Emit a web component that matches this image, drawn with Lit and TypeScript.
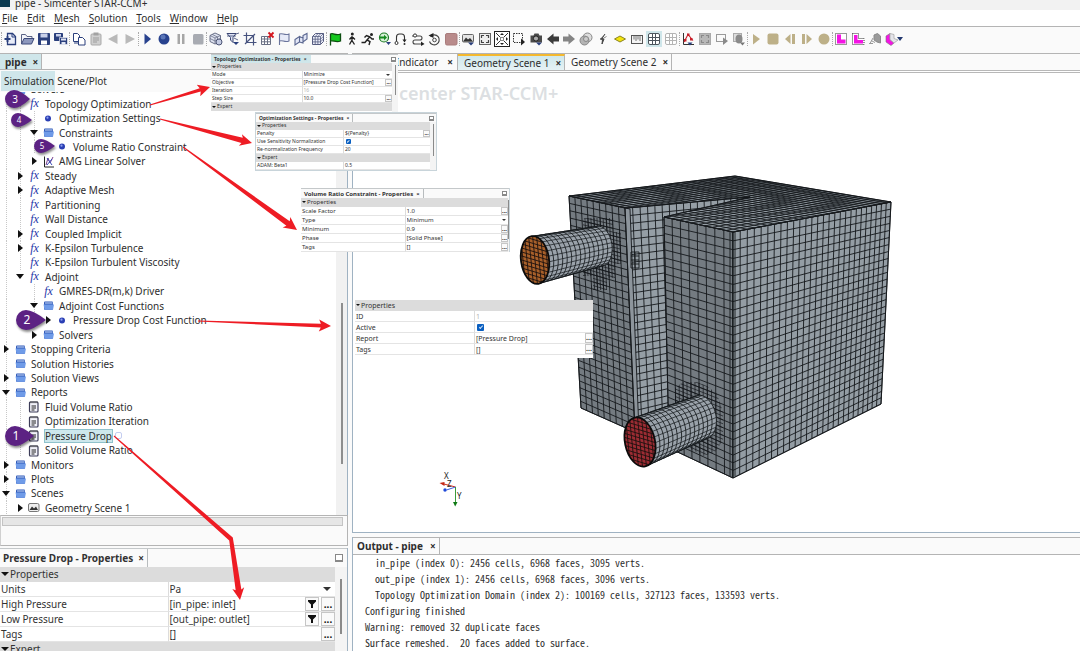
import { LitElement, html, svg, css, nothing } from "lit";
import { customElement, property } from "lit/decorators.js";
import { classMap } from "lit/directives/class-map.js";

/* ---------- toolbar icons (16 x 16) ---------- */

const NAVY = "#2a3f7c";
const DIM = "#a9a9a9";
const SAND = "#bdb088";

const grid = (c: string) => svg`
  <rect x="2.5" y="2.5" width="11" height="11" rx="1.5" fill="#fff" stroke=${c}/>
  <path d="M6.5 2.5v11M9.5 2.5v11M2.5 6.5h11M2.5 9.5h11" stroke=${c} fill="none"/>`;

const ICONS: Record<string, unknown> = {
  new: svg`<path d="M5.5 2.5h5l3 3v8h-8z" fill="#e8ecf8" stroke=${NAVY} stroke-width="1.3"/><path d="M10 2.500v3.500h3.500" fill="none" stroke=${NAVY}/><path d="M2.500 8h6M5.500 5v6" stroke=${NAVY} stroke-width="1.800"/>`,
  open: svg`<path d="M2.500 13V3.500h4l1.500 2h5V7" fill="#f4f5fa" stroke="#5a6284"/><path d="M2.500 13l2.500-5.500h10L12.500 13z" fill="#8d98bd" stroke="#3d4a7a"/>`,
  save: svg`<path d="M2.500 2.500h11v11h-11z" fill=${NAVY} stroke=${NAVY}/><path d="M4.500 2.500h7v4h-7z" fill="#c9d1ea"/><path d="M5 9.500h6v4H5z" fill="#fff"/>`,
  saveall: svg`<path d="M1.500 2.500h8v7h-8z" fill=${NAVY} stroke=${NAVY}/><path d="M3 3h5v2.500H3z" fill="#c9d1ea"/><path d="M6.500 6.500h8v7h-8z" fill=${NAVY} stroke="#fff" stroke-width=".6"/><path d="M8 7.500h5v2H8zM8.500 11h4v2.500h-4z" fill="#e1e6f4"/>`,
  copy: svg`<path d="M2.500 2.500h4l2 2v6h-6z" fill="#fff" stroke=${NAVY}/><path d="M7.500 6.500h4l2.500 2.500v5H7.500z" fill="#fff" stroke=${NAVY}/><path d="M3 12h4" stroke=${NAVY}/>`,
  paste: svg`<rect x="3" y="3" width="10" height="11" rx="1" fill="#cfcfcf" stroke=${DIM}/><path d="M5.500 1.500h5v3h-5z" fill="#a2a2a2"/><path d="M5 7h6M5 9h6M5 11h4" stroke="#9d9d9d"/>`,
  undo: svg`<path d="M12.500 3v10L3 8z" fill="#b9b9b9"/>`,
  redo: svg`<path d="M3.500 3v10L13 8z" fill="#b9b9b9"/>`,
  play: svg`<path d="M5.500 2.500v11L12 8z" fill="#28428e"/>`,
  record: svg`<circle cx="8" cy="8" r="5.500" fill="#28428e"/><circle cx="7" cy="6" r="2.500" fill="#5a76b8"/>`,
  pause: svg`<path d="M4.500 3h2.500v10H4.500zM9 3h2.500v10H9z" fill="#a6a6a6"/>`,
  stop: svg`<rect x="3" y="3" width="10.500" height="10.500" rx="1.500" fill="#a8abb2"/>`,
  mesh3d: svg`<path d="M7 2l5.500 2.500v6L7 13 2 10.500v-6z" fill="#dfe3f0" stroke="#6a7088"/><path d="M2 4.500L7 7l5.500-2.500M7 7v6M4 3.300l5.500 2.700v6M2 7.500l5 2.500 5.500-2.500" stroke="#6a7088" fill="none" stroke-width=".8"/><circle cx="11" cy="11" r="3" fill="#c4cbe2" stroke="#4c5474"/>`,
  meshf: svg`<path d="M2 2.500h9L8 6.500v5L5.500 9V6.500z" fill="#dde2f4" stroke="#3b4673"/><path d="M2 5h9M11 3l3-1M9 7l4 2" stroke="#3b4673" stroke-width=".8"/><path d="M8 11h6l-3 3z" fill=${NAVY}/>`,
  crop: svg`<path d="M4.500 1.500v10h10M1.500 4.500h10v10M3 13L13 3" fill="none" stroke="#46527e" stroke-width="1.200"/>`,
  clear: svg`<path d="M2.500 5.500h9v8h-9zM2.500 8h9M2.500 10.800h9M5.500 5.500v8M8.500 5.500v8" fill="#fff" stroke="#6a7084"/><path d="M9.500 1.500l5 5M14.500 1.500l-5 5" stroke="#d4141c" stroke-width="1.800"/>`,
  flag: svg`<path d="M3.500 14V3c3-1.500 5 2 9.500 0v7c-4.500 2-6.500-1.500-9.500 0" fill="#e6eaf8" stroke="#6a749c" stroke-width="1.100"/>`,
  slab: svg`<path d="M2 8.500l4.500-3v5.500L2 14zM6.500 5.500L10 7v5l-3.500-1M10 4.500l4-2v5.500l-4 3z" fill="#e2e6f6" stroke="#5a6690" stroke-width="1.100"/>`,
  volume: svg`<path d="M2.500 5.500l3-3h8v8l-3 3h-8z" fill="#eceefa" stroke="#565d80"/><path d="M2.500 5.500h8v8M10.500 5.500l3-3M2.500 8.200h8l3-3M2.500 10.900h8l3-3M5.200 13.500v-8l3-3M7.900 13.500v-8l3-3" fill="none" stroke="#565d80" stroke-width=".8"/>`,
  gflag: svg`<path d="M3.500 14.500V3c3-1.500 5 2 10 0v7c-4.500 2-7-1-10 0" fill="#14c81e" stroke="#0c4d10" stroke-width="1.300"/>`,
  walk: svg`<circle cx="8.300" cy="3" r="1.500" fill="#222"/><path d="M8 5v4.500l2.500 4M8 9l-2.500 4.500M8 5.500L5.500 8.500M8 5.500L11 8.500" stroke="#222" stroke-width="1.300" fill="none"/>`,
  run: svg`<circle cx="11.500" cy="3.500" r="1.500" fill="#222"/><path d="M10 5.500L7 9l3 1.500-1 3.500M7 9l-2 2.500H1.500M10 6L6.500 4.500 4.500 6.500M10 6l2 2h2" stroke="#222" stroke-width="1.400" fill="none"/>`,
  step: svg`<circle cx="7" cy="6.500" r="4.500" fill="#d8f0d8" stroke="#1b7a24" stroke-width="1.200"/><path d="M3 5.500h4V3.800l3 2.700-3 2.700V7.500H3z" fill="#148a1e"/><path d="M9 11h5l-2.500 3z" fill=${NAVY}/>`,
  loop: svg`<path d="M3.500 10.500V6a3 3 0 0 1 3-3h2a3 3 0 0 1 3 3v4" fill="none" stroke="#333" stroke-width="1.100"/><path d="M9.500 8.500h4l-2 3z" fill="#222"/><circle cx="3.500" cy="12" r="1.500" fill="#fff" stroke="#333"/><circle cx="11.500" cy="13" r="1" fill="#333"/>`,
  bypass: svg`<path d="M2 5h8a2 2 0 0 1 0 4H5a2 2 0 0 0 0 4h8" fill="none" stroke="#444" stroke-width="1.100"/><circle cx="5" cy="4.500" r="1.600" fill="#fff" stroke="#333"/><path d="M11 10.500l3.500 2.500-3.500 2z" fill="#222"/>`,
  reset: svg`<path d="M4.500 5.500a5 5 0 1 1-1 5" fill="none" stroke="#444" stroke-width="1.200"/><path d="M2.500 4.500L7.500 2v5z" fill="#222"/><circle cx="8.500" cy="9" r="1.800" fill="none" stroke="#444"/>`,
  rstop: svg`<rect x="2.500" y="2.500" width="11.500" height="11.500" rx="1.500" fill="#b98b8b" stroke="#a97c7c"/>`,
  scene: svg`<rect x="2.500" y="3.500" width="11" height="7.500" rx="1" fill="#e4e4e4" stroke="#666"/><path d="M3 10.500l3-4 2 2 2-1.500 3 3.500z" fill="#333"/><path d="M8 11.500h6l-3 3z" fill=${NAVY}/>`,
  fit: svg`<rect x="2.500" y="2.500" width="11" height="11" fill="#eee" stroke="#666"/><path d="M4.500 7V4.500H7M9 4.500h2.500V7M11.500 9v2.500H9M7 11.500H4.500V9" fill="none" stroke="#444" stroke-width="1.200"/>`,
  expand: svg`<rect x=".5" y=".5" width="15" height="15" fill="#fff" stroke="#222"/><path d="M2 2l12 12M14 2L2 14" stroke="#333"/><path d="M6 4l2-2 2 2zM6 12l2 2 2-2zM4 6L2 8l2 2zM12 6l2 2-2 2z" fill="#222"/><rect x="6.500" y="6.500" width="3" height="3" fill="#fff" stroke="#888"/>`,
  select: svg`<rect x="2.500" y="2.500" width="9" height="9" fill="none" stroke="#333" stroke-dasharray="1.500 1"/><path d="M10 7.500v7l4-3.500z" fill="#222"/>`,
  camera: svg`<path d="M2.500 4.500h3l1-2h4l1 2h2.500v7h-11.500z" fill="#4a4a4a"/><circle cx="8" cy="7.500" r="2.600" fill="#aaa" stroke="#222"/><path d="M8 11.500h6l-3 3z" fill=${NAVY}/>`,
  left: svg`<path d="M2 8l6.500-5.500v3H14v5H8.500v3z" fill="#3b3b3b"/>`,
  right: svg`<path d="M14 8L7.500 2.500v3H2v5h5.500v3z" fill="#858585"/>`,
  blend: svg`<circle cx="9.500" cy="6.500" r="4.500" fill="#ddd" stroke="#888"/><circle cx="6.500" cy="9.500" r="4.500" fill="#b4b4b4" stroke="#888"/><circle cx="8" cy="8" r="2.500" fill="#ccc" stroke="#888"/>`,
  probe: svg`<path d="M10 3L7 7.500l2 .5-2 5 .5-4.500L5 8" fill="#555" stroke="#444"/><path d="M9 7l2.500-1.500" stroke="#888"/>`,
  diamond: svg`<path d="M2.500 8L8 5l5.500 3L8 11z" fill="#f2e30c" stroke="#8c8420"/>`,
  ruler: svg`<rect x="2.500" y="4.500" width="11" height="8" fill="#f4f4f4" stroke="#555"/><path d="M5 5v3.500M7 5v5M9 5v3.500M11 5v5" stroke="#555" stroke-width=".8"/>`,
  grid: grid("#4c545c"),
  grid2: grid("#b4b4b4"),
  plot: svg`<path d="M3.500 2v11.500H14" fill="none" stroke="#333"/><path d="M4 11l4-7.500 5 6" fill="none" stroke="#c8202a" stroke-width="1.100"/><path d="M7 2.500h2.500V5H7zM4 8h2.500v2.500H4zM10 7h2.500v2.500H10z" fill="#c8202a"/><path d="M7.500 11.500h5L10 14.500z" fill=${NAVY}/>`,
  fit2: svg`<rect x="2.500" y="2.500" width="11" height="11" fill="#b8b8b8" stroke="#aaa"/><path d="M4.500 7V4.500H7M9 4.500h2.500V7M11.500 9v2.500H9M7 11.500H4.500V9" fill="none" stroke="#8a8a8a" stroke-width="1.200"/>`,
  select2: svg`<rect x="2.500" y="3.500" width="9" height="7" fill="none" stroke="#9a9a9a"/><path d="M9 6.500v7.500l5-4z" fill="#8a8a8a"/>`,
  shade: svg`<rect x="2.500" y="2.500" width="8" height="8" fill="#ddd" stroke="#aaa"/><ellipse cx="8" cy="8" rx="3.500" ry="4.500" fill="#8a8a8a"/><path d="M9 11.500h5l-2.500 3z" fill="#777"/>`,
  splay: svg`<path d="M5 3v10.500L12 8z" fill=${SAND}/>`,
  sstop: svg`<rect x="2.500" y="2.500" width="11" height="11" rx="2" fill=${SAND}/>`,
  sprev: svg`<path d="M8.500 3v10L3 8zM10 3h3v10h-3z" fill=${SAND}/>`,
  snext: svg`<path d="M7.500 3v10L13 8zM3 3h3v10H3z" fill=${SAND}/>`,
  srec: svg`<circle cx="8" cy="8" r="5.500" fill=${SAND}/>`,
  mag1: svg`<rect x="2.500" y="2.500" width="11" height="11" fill="#fff" stroke="#333" stroke-dasharray="1 1"/><path d="M4 3.500h4v5h4.500v4H4z" fill="#f414e4"/>`,
  mag2: svg`<path d="M2.500 2.500h6v5h5.500v6H2.500z" fill="#fff" stroke="#333" stroke-dasharray="1 1"/><path d="M4 4h3.500v5H13v3.500H4z" fill="#f414e4"/>`,
  plane: svg`<path d="M7 4l3.500-1.500L13.500 5v7L10 11l-3-2z" fill="#9a9a9a" stroke="#8a8a8a"/><path d="M3 12.500l3-5.500M2 12.500h4M4 9.500l4 2" stroke="#999" fill="none"/>`,
  section: svg`<path d="M2 5l4-2.500v6L10 12l-3 2.500L2 11z" fill="#f414e4" stroke="#777" stroke-width=".6"/><path d="M6 2.500l4 1v4l4 1.500-4 3-4-3.500z" fill="#e4e4ea" stroke="#aaa" stroke-width=".8"/>`,
};

const TOOLBAR: { cls: string; icons: string[] }[] = [
  { cls: "g1", icons: ["new", "open", "save", "saveall"] },
  { cls: "g2", icons: ["copy", "paste", "undo", "redo"] },
  { cls: "g3", icons: ["play", "record", "pause", "stop"] },
  { cls: "g4", icons: ["mesh3d", "meshf", "crop", "clear", "flag", "slab", "volume"] },
  { cls: "g5", icons: ["gflag", "walk", "run", "step", "loop", "bypass", "reset", "rstop"] },
  { cls: "g6", icons: ["scene", "fit", "expand", "select", "camera", "left", "right", "blend", "probe", "diamond", "ruler", "grid", "grid2"] },
  { cls: "g7", icons: ["plot", "fit2", "select2", "shade"] },
  { cls: "g8", icons: ["splay", "sstop", "sprev", "snext", "srec"] },
  { cls: "g9", icons: ["mag1", "mag2", "plane", "section"] },
];

/* ---------- simulation tree ---------- */

type Node = { l: number; t: string; i: string; a?: "o" | "c"; g?: number[]; sel?: boolean };

const TREE: Node[] = [
  { l: 0, t: "Solvers", i: "folder", a: "o" },
  { l: 1, t: "Topology Optimization", i: "fx", g: [0, 1] },
  { l: 2, t: "Optimization Settings", i: "dot", g: [0, 1, 2] },
  { l: 2, t: "Constraints", i: "folder", a: "o", g: [0, 1, 2] },
  { l: 3, t: "Volume Ratio Constraint", i: "dot", g: [0, 1, 2] },
  { l: 2, t: "AMG Linear Solver", i: "amg", a: "c", g: [0, 1] },
  { l: 1, t: "Steady", i: "fx", a: "c", g: [0, 1] },
  { l: 1, t: "Adaptive Mesh", i: "fx", a: "c", g: [0, 1] },
  { l: 1, t: "Partitioning", i: "fx", g: [0, 1] },
  { l: 1, t: "Wall Distance", i: "fx", g: [0, 1] },
  { l: 1, t: "Coupled Implicit", i: "fx", a: "c", g: [0, 1] },
  { l: 1, t: "K-Epsilon Turbulence", i: "fx", a: "c", g: [0, 1] },
  { l: 1, t: "K-Epsilon Turbulent Viscosity", i: "fx", g: [0, 1] },
  { l: 1, t: "Adjoint", i: "fx", a: "o", g: [0] },
  { l: 2, t: "GMRES-DR(m,k) Driver", i: "fx", g: [0, 2] },
  { l: 2, t: "Adjoint Cost Functions", i: "folder", a: "o", g: [0, 2] },
  { l: 3, t: "Pressure Drop Cost Function", i: "dot", a: "c", g: [0, 2] },
  { l: 2, t: "Solvers", i: "folder", a: "c", g: [0] },
  { l: 0, t: "Stopping Criteria", i: "folder", a: "c", g: [0] },
  { l: 0, t: "Solution Histories", i: "folder", g: [0] },
  { l: 0, t: "Solution Views", i: "folder", a: "c", g: [0] },
  { l: 0, t: "Reports", i: "folder", a: "o", g: [0] },
  { l: 1, t: "Fluid Volume Ratio", i: "rep", g: [0, 1] },
  { l: 1, t: "Optimization Iteration", i: "rep", g: [0, 1] },
  { l: 1, t: "Pressure Drop", i: "rep", g: [0, 1], sel: true },
  { l: 1, t: "Solid Volume Ratio", i: "rep", g: [0, 1] },
  { l: 0, t: "Monitors", i: "folder", a: "c", g: [0] },
  { l: 0, t: "Plots", i: "folder", a: "c", g: [0] },
  { l: 0, t: "Scenes", i: "folder", a: "o", g: [0] },
  { l: 1, t: "Geometry Scene 1", i: "scene", a: "c", g: [0] },
];

const TREE_ICONS: Record<string, unknown> = {
  folder: svg`<path d="M2 3.500q0-1 1-1h7q1 0 1 1V10q0 .7-.7.7H2.700Q2 10.700 2 10z" fill="#2f58b8"/><path d="M1.500 5.500h10.500l-1 5.200H2.500z" fill="#6f9be8"/><path d="M3 4h7.500" stroke="#cfe0fb"/>`,
  dot: svg`<circle cx="6" cy="6.500" r="3" fill="#2b3fb4"/><circle cx="5.500" cy="5.700" r="1.100" fill="#8fa0ee"/>`,
  amg: svg`<path d="M2.500 1.500v10.500H12" fill="none" stroke="#222"/><path d="M4 10l2-7 2 5 3-6" fill="none" stroke="#7a3f8c"/><path d="M5 3l5 7M10 4l-5 6" stroke="#3a4bb8"/>`,
  rep: svg`<rect x="1.500" y="2" width="8.500" height="10" rx="1" fill="#f2f2fa" stroke="#3c3c58" stroke-width="1.200"/><path d="M3.500 6h4.500M3.500 8h4.500M3.500 10h3" stroke="#222"/><path d="M3 1.200v2M5 1.200v2M7 1.200v2M9 1.200v2" stroke="#444"/>`,
  scene: svg`<rect x=".5" y="2.500" width="10.500" height="8" rx="1.500" fill="#eee" stroke="#777"/><path d="M1.500 9L4 5.500 6 7.500 8 5.500 10 9z" fill="#333"/>`,
};

/* ---------- geometry helpers for the meshed solid ---------- */

type P = [number, number];

/** Projective map of the unit square on to a quad given as (0,0) (1,0) (1,1) (0,1). */
function project(q: P[]): (u: number, v: number) => P {
  const [[x0, y0], [x1, y1], [x2, y2], [x3, y3]] = q;
  const dx1 = x1 - x2, dx2 = x3 - x2, sx = x0 - x1 + x2 - x3;
  const dy1 = y1 - y2, dy2 = y3 - y2, sy = y0 - y1 + y2 - y3;
  const det = dx1 * dy2 - dx2 * dy1;
  const g = (sx * dy2 - dx2 * sy) / det;
  const h = (dx1 * sy - sx * dy1) / det;
  const a = x1 - x0 + g * x1, b = x3 - x0 + h * x3;
  const d = y1 - y0 + g * y1, e = y3 - y0 + h * y3;
  return (u, v) => {
    const w = g * u + h * v + 1;
    return [(a * u + b * v + x0) / w, (d * u + e * v + y0) / w];
  };
}

const f = (n: number) => n.toFixed(2);
const poly = (pts: P[]) => pts.map(([x, y]) => `${f(x)},${f(y)}`).join(" ");

function meshPath(q: P[], nu: number, nv: number): string {
  const m = project(q);
  let d = "";
  const seg = (p: P, r: P) => (d += `M${f(p[0])} ${f(p[1])}L${f(r[0])} ${f(r[1])}`);
  for (let i = 0; i <= nu; i++) seg(m(i / nu, 0), m(i / nu, 1));
  for (let j = 0; j <= nv; j++) seg(m(0, j / nv), m(1, j / nv));
  return d;
}

const TOP: P[] = [[569, 196], [735, 176], [891, 202], [733, 232]];
const TOP_OUTLINE: P[] = [[569, 196], [735, 176], [891, 202], [733, 232], [664, 217], [750, 197], [627, 208]];
const RIGHT: P[] = [[733, 232], [891, 202], [881, 404], [733, 478]];
const FRONT: P[] = [[664, 217], [733, 232], [733, 478], [669, 448]];
const NOTCH: P[] = [[625, 208], [750, 196], [752, 402], [635, 432]];
const COLUMN: P[] = [[569, 196], [625, 208], [635, 432], [581, 408]];

type Pipe = { a: P; ar: P; b: P; br: P; tilt: number; cap: string; id: string };
const PIPES: Pipe[] = [
  { a: [535, 260], ar: [14, 24], b: [600, 246], br: [12, 20], tilt: -8, cap: "#a8602a", id: "cap-in" },
  { a: [640, 442], ar: [15, 25], b: [702, 417], br: [14, 22], tilt: -12, cap: "#9c2c33", id: "cap-out" },
];

function pipe(p: Pipe) {
  const rings = 14;
  const mix = (t: number) => ({
    cx: p.a[0] + (p.b[0] - p.a[0]) * t,
    cy: p.a[1] + (p.b[1] - p.a[1]) * t,
    rx: p.ar[0] + (p.br[0] - p.ar[0]) * t,
    ry: p.ar[1] + (p.br[1] - p.ar[1]) * t,
  });
  const k = (p.tilt * Math.PI) / 180;
  const on = (t: number, th: number): P => {
    const m = mix(t);
    const x = m.rx * Math.cos(th), y = m.ry * Math.sin(th);
    return [m.cx + x * Math.cos(k) - y * Math.sin(k), m.cy + x * Math.sin(k) + y * Math.cos(k)];
  };
  const discs = [];
  for (let i = rings; i > 0; i--) {
    const m = mix(i / rings);
    discs.push(svg`<ellipse cx=${f(m.cx)} cy=${f(m.cy)} rx=${f(m.rx)} ry=${f(m.ry)}
      transform=${`rotate(${p.tilt} ${f(m.cx)} ${f(m.cy)})`} fill="#9aa2aa" stroke="#14181b" stroke-width=".8"/>`);
  }
  let lines = "";
  for (let i = -7; i <= 7; i++) {
    const th = (i / 7) * (Math.PI / 2) * 1.05 - 0.08;
    const s = on(0, th), e = on(1, th);
    lines += `M${f(s[0])} ${f(s[1])}L${f(e[0])} ${f(e[1])}`;
  }
  const c = mix(0);
  let cells = "";
  for (let i = -28; i <= 28; i += 4) {
    cells += `M${f(c.cx + i - 3)} ${f(c.cy - 30)}L${f(c.cx + i + 3)} ${f(c.cy + 30)}M${f(c.cx - 20)} ${f(c.cy + i - 6)}L${f(c.cx + 20)} ${f(c.cy + i + 6)}`;
  }
  const rot = `rotate(${p.tilt} ${f(c.cx)} ${f(c.cy)})`;
  return svg`
    <clipPath id=${p.id}><ellipse cx=${c.cx} cy=${c.cy} rx=${c.rx} ry=${c.ry} transform=${rot}/></clipPath>
    ${discs}
    <path d=${lines} stroke="#14181b" stroke-width=".7" fill="none"/>
    <ellipse cx=${c.cx} cy=${c.cy} rx=${c.rx} ry=${c.ry} transform=${rot} fill=${p.cap}/>
    <path d=${cells} clip-path=${`url(#${p.id})`} stroke="#1c1210" stroke-width=".9"/>
    <ellipse cx=${c.cx} cy=${c.cy} rx=${c.rx} ry=${c.ry} transform=${rot} fill="none" stroke="#0b0b0b" stroke-width="1.800"/>`;
}

const solid = svg`
  <clipPath id="top"><polygon points=${poly(TOP_OUTLINE)}/></clipPath>
  <clipPath id="r1"><path d="M583 218h30v14h8v32h-6v14h-8v12h-14v-14h-10z"/></clipPath>
  <clipPath id="r2"><path d="M675 388l8-6h14l10 4 10 8 6 18v28l-8 12-12 4-10-6-18-8z"/></clipPath>
  <clipPath id="col"><polygon points=${poly(COLUMN)}/></clipPath>
  <clipPath id="frt"><polygon points=${poly(FRONT)}/></clipPath>
  <g stroke="#15191c" fill="none" stroke-width=".9">
    <polygon points=${poly(NOTCH)} fill="#959ea5"/>
    <path d=${meshPath(NOTCH, 18, 30)}/>
    <polygon points=${poly(COLUMN)} fill="#747b81"/>
    <path d="M625 208l5 1 9 223-4 0z" fill="#8d959c"/>
    <path d=${meshPath(COLUMN, 9, 30)}/>
    <g clip-path="url(#col)"><path stroke-width=".7" clip-path="url(#r1)" d=${meshPath(COLUMN, 18, 60)}/></g>
    <path d="M631 252h8v16h-8zM635 252v16M631 256h8M631 260h8M631 264h8"/>
    <polygon points=${poly(FRONT)} fill="#747b81"/>
    <path d=${meshPath(FRONT, 8, 30)}/>
    <g clip-path="url(#frt)"><path stroke-width=".7" clip-path="url(#r2)" d=${meshPath(FRONT, 16, 60)}/></g>
    <polygon points=${poly(RIGHT)} fill="#949da4"/>
    <path d=${meshPath(RIGHT, 27, 30)}/>
    <path d="M730 232v244M735 232v244"/>
    <polygon points=${poly(TOP_OUTLINE)} fill="#949da4"/>
    <path clip-path="url(#top)" d=${meshPath(TOP, 27, 27)}/>
    <polygon points=${poly(TOP_OUTLINE)}/>
  </g>
  ${PIPES.map(pipe)}`;

/** A tapering shaft through the points, with a barbed head on the last one. */
function arrow(pts: P[], w: number, head: number) {
  const n = pts.length;
  const total = pts.slice(1).reduce((s, p, i) => s + Math.hypot(p[0] - pts[i][0], p[1] - pts[i][1]), 0);
  const [bx, by] = pts[n - 1];
  const [ax, ay] = pts[n - 2];
  const L = Math.hypot(bx - ax, by - ay);
  const ux = (bx - ax) / L, uy = (by - ay) / L;
  const neck: P = [bx - ux * head * 0.85, by - uy * head * 0.85];
  const path = [...pts.slice(0, -1), neck];
  const leftSide: P[] = [], rightSide: P[] = [];
  let run = 0;
  path.forEach((p, i) => {
    if (i) run += Math.hypot(p[0] - path[i - 1][0], p[1] - path[i - 1][1]);
    const q = path[Math.min(i + 1, path.length - 1)], o = path[Math.max(i - 1, 0)];
    const l = Math.hypot(q[0] - o[0], q[1] - o[1]) || 1;
    const nx = -(q[1] - o[1]) / l, ny = (q[0] - o[0]) / l;
    const hw = (1 + (w - 1) * (run / total)) / 2;
    leftSide.push([p[0] + nx * hw, p[1] + ny * hw]);
    rightSide.unshift([p[0] - nx * hw, p[1] - ny * hw]);
  });
  const hb: P = [bx - ux * head, by - uy * head];
  const s = head * 0.5;
  return svg`<polygon points=${poly([...leftSide, [hb[0] - uy * s, hb[1] + ux * s], [bx, by], [hb[0] + uy * s, hb[1] - ux * s], ...rightSide])}/>`;
}

const pin = (n: string, cx: number, cy: number, r: number, tip: number, size: number) => svg`
  <path class="pin" d=${`M${cx} ${cy - r}Q${cx + r * 0.7} ${cy - r} ${tip} ${cy}Q${cx + r * 0.7} ${cy + r} ${cx} ${cy + r}A${r} ${r} 0 0 1 ${cx} ${cy - r}z`}/>
  <text class="pin-no" x=${cx + 1} y=${cy + Math.round(size * 0.36)} font-size=${size}>${n}</text>`;

/* ---------- property sheet ---------- */

type Row = { k: string; v?: string; head?: boolean; kind?: "more" | "filter" | "select" | "check" | "dim"; };

@customElement("property-sheet")
export class PropertySheet extends LitElement {
  @property() heading = "";
  @property({ type: Boolean }) tinted = false;
  @property({ type: Number }) split = 50;
  @property({ attribute: false }) rows: Row[] = [];

  static styles = css`
    :host { display: flex; flex-direction: column; background: #fff; color: #333; box-sizing: border-box; overflow: hidden; }
    .bar { display: flex; justify-content: space-between; align-items: center; height: var(--bar, 9px); flex: none; background: #fafafa; border-top: 1px solid #c4c8ca; box-sizing: border-box; }
    .tab { display: flex; align-items: center; gap: var(--tab-gap, 3px); align-self: stretch; padding: 0 3px; border-right: 1px solid #b8bcbe; font-weight: 700; white-space: nowrap; }
    .props-pad .tab { padding-left: 5px; }
    .tinted .tab, .tinted tr:first-child td { background: #cfe6ea; border-color: #cfe6ea; }
    .close, .min { border: 0; background: none; padding: 0; font: inherit; line-height: 1; color: #333; }
    .min { width: var(--min, 5px); height: var(--min, 5px); border: 1px solid #888; border-bottom-width: 2px; box-sizing: border-box; margin-right: var(--min-gap, 2px); background: #fff; }
    .body { flex: 1; min-height: 0; display: flex; align-items: flex-start; }
    table { flex: 1; min-width: 0; border-collapse: separate; border-spacing: 0; table-layout: fixed; }
    td { padding: 0; height: var(--row, 8px); box-sizing: border-box; border-bottom: 1px solid #e4e4e4; line-height: 1; white-space: nowrap; overflow: hidden; }
    td + td { border-left: 1px solid #dcdcdc; }
    .head td { background: #dcdcdc; border-color: #dcdcdc; }
    .key { padding-left: 1px; }
    .cell { display: flex; align-items: center; justify-content: space-between; padding-left: 1px; height: calc(var(--row, 8px) - 1px); }
    .dim { color: #b4b4b4; }
    .headline { display: flex; align-items: center; gap: 1px; }
    .tri { border: var(--caret, 2px) solid transparent; border-top-color: #111; border-bottom: 0; margin-left: 1px; }
    .tools { display: flex; gap: 2px; }
    .tool { width: var(--tool, 7px); height: calc(var(--row, 8px) - 1px); padding: 0 0 1px; border: 1px solid #c6c6c6; background: #fafafa; font: inherit; font-weight: 700; line-height: 0; color: #111; display: grid; place-items: center; box-sizing: border-box; overflow: hidden; }
    .tool svg { width: 8px; height: 10px; }
    select { appearance: none; border: 0; background: none; padding: 0; font: inherit; color: inherit; line-height: 1; flex: 1; height: auto; min-width: 0; }
    .caret { border: var(--caret, 2px) solid transparent; border-top-color: #333; border-bottom: 0; margin-right: var(--caret, 2px); }
    input { appearance: none; width: var(--check, 5px); height: var(--check, 5px); margin: 0 0 0 1px; background: #0a5fc0; border-radius: 1px; display: grid; place-items: center; }
    input::after { content: ""; width: 50%; height: 25%; border: solid #cfe0f4; border-width: 0 0 1px 1px; transform: rotate(-45deg); box-sizing: border-box; }
    .rail { align-self: stretch; width: var(--rail, 6px); background: #f4f4f4; display: flex; justify-content: center; padding-top: var(--rail-top, 2px); box-sizing: border-box; }
    .thumb { width: var(--thumb-w, 1px); height: var(--thumb, 75%); background: #8a8a8a; }
  `;

  private value(r: Row) {
    if (r.kind === "check") return html`<input type="checkbox" checked aria-label=${r.k} />`;
    if (r.kind === "select")
      return html`<select aria-label=${r.k}><option>${r.v}</option></select><span class="caret"></span>`;
    const more = html`<button class="tool" aria-label=${`Edit ${r.k}`}>...</button>`;
    const filter = html`<button class="tool" aria-label=${`Filter ${r.k}`}><svg viewBox="0 0 8 10"><path d="M0 1h8v1.500L5 5.500V9H3V5.500L0 2.500z" fill="#111"/></svg></button>`;
    return html`<span class=${classMap({ dim: r.kind === "dim" })}>${r.v}</span>
      ${r.kind === "more" || r.kind === "filter"
        ? html`<span class="tools">${r.kind === "filter" ? filter : nothing}${more}</span>`
        : nothing}`;
  }

  render() {
    return html`
      ${this.heading
        ? html`<div class=${classMap({ bar: true, tinted: this.tinted })}>
            <span class="tab">${this.heading}<button class="close" aria-label="Close">×</button></span>
            <button class="min" aria-label="Minimize"></button>
          </div>`
        : nothing}
      <div class=${classMap({ body: true, tinted: this.tinted })}>
        <table>
          <colgroup><col style=${`width:${this.split}%`} /><col /></colgroup>
          ${this.rows.map((r) =>
            r.head
              ? html`<tr class="head"><td colspan="2"><span class="headline"><span class="tri"></span>${r.k}</span></td></tr>`
              : html`<tr><td class="key">${r.k}</td><td><div class="cell">${this.value(r)}</div></td></tr>`
          )}
        </table>
        <div class="rail"><div class="thumb"></div></div>
      </div>`;
  }
}

/* ---------- application window ---------- */

@customElement("app-root")
export class AppRoot extends LitElement {
  static styles = css`
    :host { display: flex; flex-direction: column; position: relative; height: 100vh; overflow: hidden; background: #fafafa; color: #2e2e2e; font: 10px/14px "Noto Sans", sans-serif; }
    button, select, input { font: inherit; color: inherit; }
    .title { height: 10px; flex: none; overflow: hidden; background: #f2f2f2; display: flex; align-items: flex-end; gap: 5px; line-height: 14px; }
    .logo { width: 10px; height: 7px; align-self: flex-start; background: #0b3a50; }
    .menu { display: flex; gap: 9px; height: 16px; padding: 0 2px; background: #fff; border-bottom: 1px solid #b4b4b4; flex: none; }
    .menu button { border: 0; padding: 0; background: none; line-height: 17px; height: 16px; }
    .toolbar { height: 26px; flex: none; display: flex; align-items: center; padding: 0 0 2px 1px; box-sizing: border-box; }
    .group { display: flex; justify-content: space-around; align-items: center; height: 14px; border-left: 1px dotted #aaa; box-sizing: border-box; }
    .g1, .g3, .g7, .g9 { width: 68px; }
    .g2 { width: 69px; }
    .g4 { width: 120px; }
    .g5 { width: 133px; }
    .g6 { width: 220px; }
    .g8 { width: 85px; }
    .ib { width: 16px; height: 16px; padding: 0; border: 0; background: none; display: block; }
    .ib svg { display: block; width: 16px; height: 16px; }
    .on { background: #cfe6ea; }
    .drop { border: 3px solid transparent; border-top: 4px solid #23386f; border-bottom: 0; margin-left: -3px; }

    .main { flex: 1; min-height: 0; display: grid; grid-template-columns: 348px minmax(0, 1fr); column-gap: 4px; }
    .side, .work { display: flex; flex-direction: column; min-height: 0; min-width: 0; }
    .tabs { display: flex; height: 17px; flex: none; border-top: 1px solid #b4b4b4; border-bottom: 1px solid #b4b4b4; box-sizing: border-box; }
    .tab { display: flex; align-items: center; justify-content: space-between; gap: 6px; padding: 0 5px; border-right: 1px solid #b4b4b4; white-space: nowrap; }
    .x { border: 0; background: none; padding: 0; line-height: 1; font-weight: 700; }
    .pipe { background: #cfe6ea; font-weight: 700; padding: 0 3px 0 5px; }
    .views { display: flex; height: 20px; flex: none; padding: 1px; gap: 2px; }
    .view { border: 0; background: none; padding: 0; }
    .view.current { background: #cfe6ea; padding: 0 1px 0 3px; }
    .treebox { flex: 1; min-height: 0; display: flex; background: #fff; border-right: 1px solid #9fb2c2; }
    .scroll { flex: 1; overflow: hidden; display: flex; flex-direction: column; justify-content: flex-end; }
    .tree { margin: 0; padding: 0; list-style: none; height: 433px; flex: none; display: flex; flex-direction: column; }
    .node { flex: 1; display: flex; align-items: center; min-height: 0; }
    .guide, .twist { width: 14px; align-self: stretch; flex: none; display: flex; justify-content: center; align-items: center; box-sizing: border-box; padding-right: 2px; }
    .line { background: repeating-linear-gradient(#c8c8c8 0 1px, transparent 1px 2px) 6px 0 / 1px 100% no-repeat; }
    .closed { border: 4px solid transparent; border-left: 5px solid #111; border-right: 0; }
    .opened { border: 4px solid transparent; border-top: 5px solid #111; border-bottom: 0; }
    .icon { width: 14px; height: 13px; flex: none; margin-right: 3px; display: block; }
    .fx { width: 13px; flex: none; margin-right: 4px; font: italic 12px/13px "Liberation Serif", serif; color: #2636a8; text-align: center; }
    .name { white-space: nowrap; }
    .sel { background: #cde7ec; box-shadow: 0 0 0 1px #8fc2cc; line-height: 12px; }
    .bubble { width: 5px; height: 5px; margin-left: 3px; border: 1px solid #c4cdf0; border-radius: 2px; }
    .track { width: 11px; flex: none; background: #f1f1f1; display: flex; justify-content: center; align-items: flex-end; padding-bottom: 51px; box-sizing: border-box; }
    .grip { width: 2px; height: 161px; background: #8e8e8e; }
    .hbar { height: 31px; flex: none; box-sizing: border-box; border: 1px solid #b4b4b4; border-left-color: #d0d0d0; padding: 1px 4px 0 1px; }
    .hthumb { height: 9px; background: #e6e6e6; border: 1px solid #c4c4c4; box-sizing: border-box; }
    .props { margin-top: 2px; height: 103px; flex: none; border-right: 1px solid #9fb2c2; --bar: 19px; --row: 15px; --tool: 14px; --rail: 12px; --min: 8px; --min-gap: 4px; --caret: 4px; --tab-gap: 5px; --thumb: 55px; --thumb-w: 2px; --rail-top: 12px; }

    .doc { border-bottom: 0; }
    .doc .tab { box-sizing: border-box; padding: 0 3px 0 6px; width: 107px; }
    .doc .first { width: 106px; justify-content: flex-end; gap: 9px; padding-right: 4px; }
    .doc .current { background: linear-gradient(#cfe8ec, #e6f2f4); border-top: 2px solid #f4b82e; padding-bottom: 1px; }
    .view3d { flex: 1; min-height: 0; background: #fff; border: 1px solid #9fb2c2; border-top: 3px double #b8b8b8; border-right: 0; position: relative; }
    .mark { position: absolute; left: 46px; top: 8px; font-size: 18px; line-height: 24px; font-weight: 600; color: #dcdfe2; white-space: nowrap; }
    .out { height: 114px; flex: none; margin-top: 4px; display: flex; flex-direction: column; border-left: 1px solid #9fb2c2; }
    .out .tabs { height: 18px; }
    .out .tab { font-weight: 700; gap: 7px; padding: 0 3px 0 4px; }
    .log { margin: 0; padding: 0 12px; background: #fff; flex: 1; overflow: hidden; font: 10px/16px "Noto Sans CJK SC", monospace; font-feature-settings: "hwid", "liga" 0; }

    .ink { position: absolute; left: 0; top: 0; width: 1080px; height: 651px; pointer-events: none; }
    .pin { fill: #5c2283; filter: drop-shadow(1px 2px 1px rgba(0, 0, 0, 0.45)); }
    .pin-no { fill: #fff; text-anchor: middle; }
    .axis { font-size: 8px; fill: #222; }
    .float { position: absolute; }
    .p1 { left: 211px; top: 54px; width: 187px; height: 58px; font-size: 5px; --bar: 9px; --thumb: 30px; }
    .p2 { left: 256px; top: 113px; width: 180px; height: 57px; font-size: 5px; box-shadow: 0 0 0 1px #c8d4da; --thumb: 32px; }
    .p3 { left: 301px; top: 188px; width: 209px; height: 64px; font-size: 6px; --bar: 10px; --row: 9px; --rail: 1px; border-right: 1px solid #c8d4da; }
    .p4 { left: 355px; top: 300px; width: 238px; height: 58px; font-size: 7px; --row: 11px; --rail: 0px; --tool: 8px; --check: 7px; }
  `;

  private ibutton(n: string) {
    return html`<button class=${classMap({ ib: true, on: n === "grid" })} aria-label=${n}><svg viewBox="0 0 16 16">${ICONS[n]}</svg></button>`;
  }

  private node(n: Node) {
    const cells = [];
    for (let i = 0; i < n.l; i++) cells.push(html`<span class=${classMap({ guide: true, line: !!n.g?.includes(i) })}></span>`);
    return html`<li class="node">
      ${cells}<span class=${classMap({ twist: true, line: !!n.g?.includes(n.l) })}>
        ${n.a ? html`<span class=${n.a === "o" ? "opened" : "closed"}></span>` : nothing}</span>
      ${n.i === "fx" ? html`<span class="fx">fx</span>` : html`<svg class="icon" viewBox="0 0 14 13">${TREE_ICONS[n.i]}</svg>`}
      <span class=${classMap({ name: true, sel: !!n.sel })}>${n.t}</span>
      ${n.sel ? html`<span class="bubble"></span>` : nothing}
    </li>`;
  }

  render() {
    return html`
      <header class="title"><span class="logo"></span><span>pipe - Simcenter STAR-CCM+</span></header>
      <nav class="menu">
        ${["File", "Edit", "Mesh", "Solution", "Tools", "Window", "Help"].map(
          (m) => html`<button><u>${m[0]}</u>${m.slice(1)}</button>`
        )}
      </nav>
      <div class="toolbar" role="toolbar">
        ${TOOLBAR.map((g) => html`<div class="group ${g.cls}">${g.icons.map((n) => this.ibutton(n))}</div>`)}
        <span class="drop"></span>
      </div>

      <div class="main">
        <section class="side">
          <div class="tabs"><span class="tab pipe">pipe<button class="x" aria-label="Close">×</button></span></div>
          <div class="views"><button class="view current">Simulation</button><button class="view">Scene/Plot</button></div>
          <div class="treebox">
            <div class="scroll"><ul class="tree">${TREE.map((n) => this.node(n))}</ul></div>
            <div class="track"><div class="grip"></div></div>
          </div>
          <div class="hbar"><div class="hthumb"></div></div>
          <property-sheet class="props" heading="Pressure Drop - Properties" .split=${50}
            .rows=${[
              { k: "Properties", head: true },
              { k: "Units", v: "Pa", kind: "select" },
              { k: "High Pressure", v: "[in_pipe: inlet]", kind: "filter" },
              { k: "Low Pressure", v: "[out_pipe: outlet]", kind: "filter" },
              { k: "Tags", v: "[]", kind: "more" },
              { k: "Expert", head: true },
            ]}></property-sheet>
        </section>

        <section class="work">
          <div class="tabs doc">
            <span class="tab first">Indicator<button class="x" aria-label="Close">×</button></span>
            <span class="tab current">Geometry Scene 1<button class="x" aria-label="Close">×</button></span>
            <span class="tab">Geometry Scene 2<button class="x" aria-label="Close">×</button></span>
          </div>
          <div class="view3d"><span class="mark">center STAR-CCM+</span></div>
          <div class="out">
            <div class="tabs"><span class="tab">Output - pipe<button class="x" aria-label="Close">×</button></span></div>
            <pre class="log">${[
              "  in_pipe (index 0): 2456 cells, 6968 faces, 3095 verts.",
              "  out_pipe (index 1): 2456 cells, 6968 faces, 3096 verts.",
              "  Topology Optimization Domain (index 2): 100169 cells, 327123 faces, 133593 verts.",
              "Configuring finished",
              "Warning: removed 32 duplicate faces",
              "Surface remeshed.  20 faces added to surface.",
            ].join("\n")}</pre>
          </div>
        </section>
      </div>

      <svg class="ink" viewBox="0 0 1080 651">
        ${solid}
        <g fill="none">
          <path d="M455.500 487L442 483.500" stroke="#d0301c"/><path d="M439.500 483l5-1v4z" fill="#c42814"/>
          <path d="M455.500 487l-9 3" stroke="#3a62e0"/><circle cx="445" cy="490" r="1.700" fill="#1f49d8"/>
          <path d="M455.500 487v16" stroke="#3c9a3c"/><path d="M453 502h4.500l-2.300 4.500z" fill="#0e7a14"/>
        </g>
        <text class="axis" x="444" y="479">X</text>
        <text class="axis" x="447" y="487">Z</text>
        <text class="axis" x="457" y="499">Y</text>
      </svg>

      <property-sheet class="float p1" heading="Topology Optimization - Properties" tinted .split=${50}
        .rows=${[
          { k: "Properties", head: true },
          { k: "Mode", v: "Minimize", kind: "select" },
          { k: "Objective", v: "[Pressure Drop Cost Function]", kind: "more" },
          { k: "Iteration", v: "16", kind: "dim" },
          { k: "Step Size", v: "10.0", kind: "more" },
          { k: "Expert", head: true },
        ]}></property-sheet>
      <property-sheet class="float p2" heading="Optimization Settings - Properties" .split=${50}
        .rows=${[
          { k: "Properties", head: true },
          { k: "Penalty", v: "\${Penalty}", kind: "more" },
          { k: "Use Sensitivity Normalization", kind: "check" },
          { k: "Re-normalization Frequency", v: "20" },
          { k: "Expert", head: true },
          { k: "ADAM: Beta1", v: "0.5" },
        ]}></property-sheet>
      <property-sheet class="float p3" heading="Volume Ratio Constraint - Properties" .split=${50}
        .rows=${[
          { k: "Properties", head: true },
          { k: "Scale Factor", v: "1.0", kind: "more" },
          { k: "Type", v: "Minimum", kind: "select" },
          { k: "Minimum", v: "0.9", kind: "more" },
          { k: "Phase", v: "[Solid Phase]", kind: "more" },
          { k: "Tags", v: "[]", kind: "more" },
        ]}></property-sheet>
      <property-sheet class="float p4" .split=${50}
        .rows=${[
          { k: "Properties", head: true },
          { k: "ID", v: "1", kind: "dim" },
          { k: "Active", kind: "check" },
          { k: "Report", v: "[Pressure Drop]", kind: "more" },
          { k: "Tags", v: "[]", kind: "more" },
        ]}></property-sheet>

      <svg class="ink" viewBox="0 0 1080 651">
        <g fill="#ee1c24">
          ${arrow([[150, 105], [210, 87]], 4, 12)}
          ${arrow([[160, 119], [252, 143]], 6, 12)}
          ${arrow([[183, 147], [297, 230]], 6, 13)}
          ${arrow([[198, 321], [331, 326]], 4, 12)}
          ${arrow([[114, 436], [231, 539], [240, 600]], 6, 12)}
        </g>
        ${pin("1", 15, 436, 10, 34, 12)}
        ${pin("2", 26, 320, 10, 46, 12)}
        ${pin("3", 14, 99, 9, 30, 10)}
        ${pin("4", 18, 120, 7, 32, 8)}
        ${pin("5", 41, 146, 7, 55, 8)}
      </svg>`;
  }
}
